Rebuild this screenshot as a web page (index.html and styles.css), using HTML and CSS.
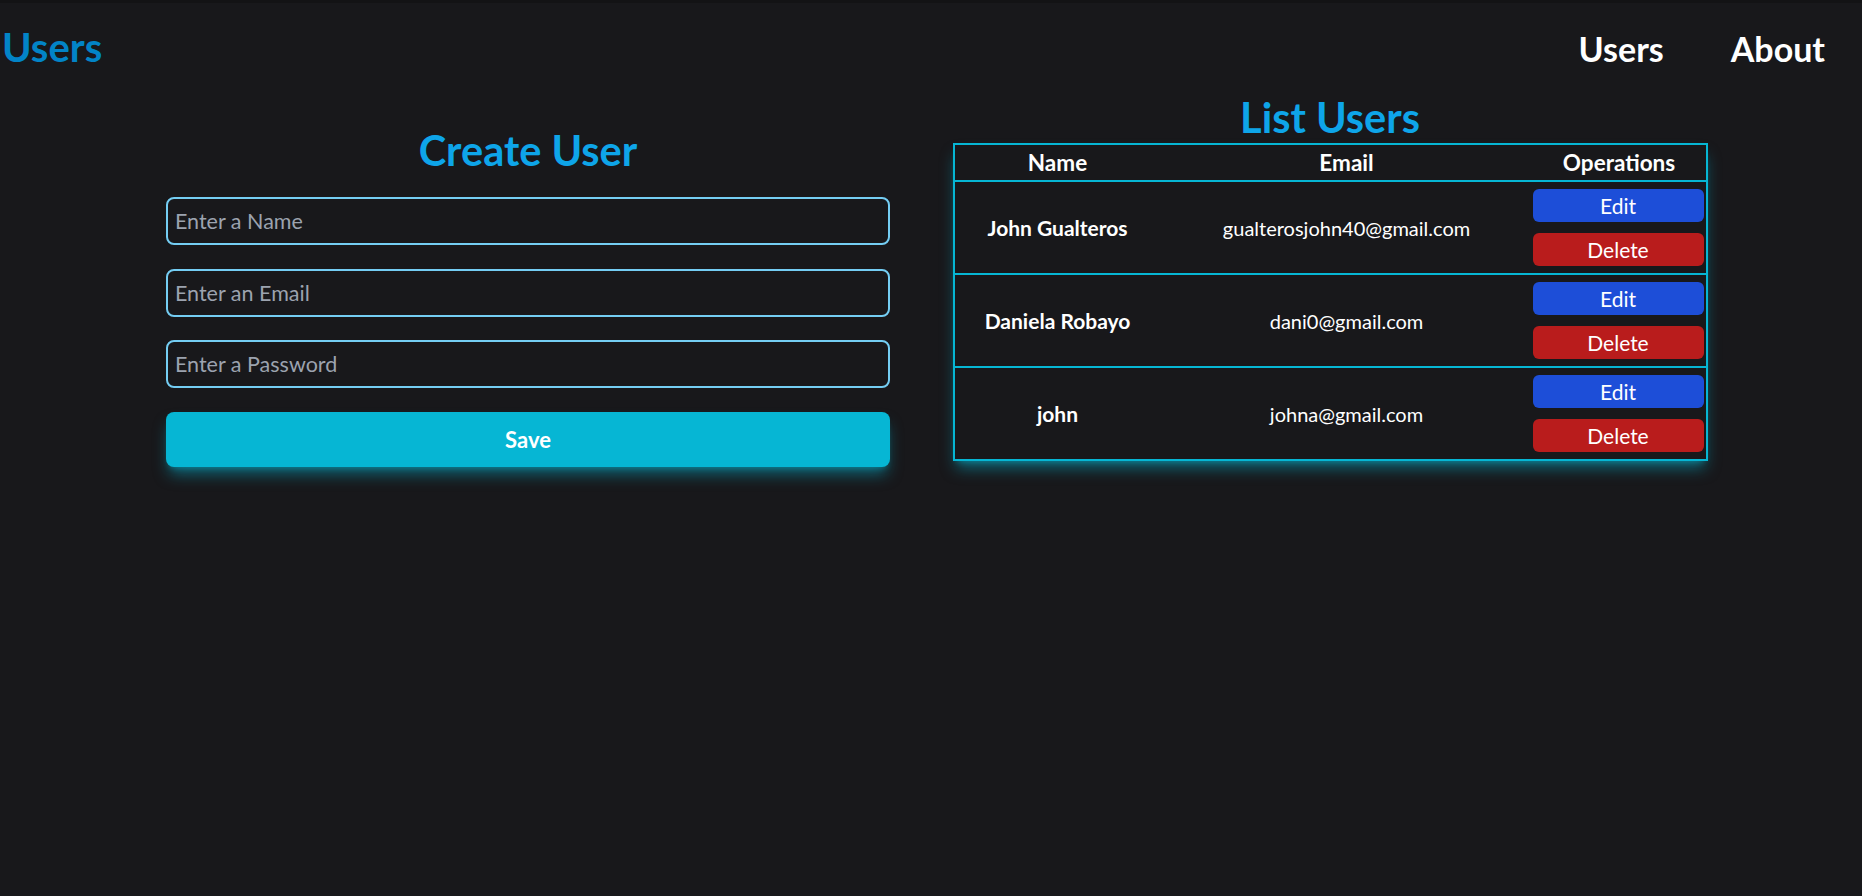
FILE: index.html
```html
<!DOCTYPE html>
<html lang="en">
<head>
<meta charset="utf-8">
<title>Users</title>
<link rel="stylesheet" href="styles.css">
</head>
<body>
<div class="topstrip"></div>
<header class="topbar">
  <h1 class="brand">Users</h1>
  <nav class="nav">
    <a class="nav-link" href="#">Users</a>
    <a class="nav-link" href="#">About</a>
  </nav>
</header>
<main class="content">
  <section class="panel panel-form">
    <h2 class="panel-title create-title">Create User</h2>
    <form class="user-form">
      <input class="field" type="text" placeholder="Enter a Name">
      <input class="field" type="email" placeholder="Enter an Email">
      <input class="field" type="password" placeholder="Enter a Password">
      <button class="btn-save" type="button">Save</button>
    </form>
  </section>
  <section class="panel panel-list">
    <h2 class="panel-title list-title">List Users</h2>
    <div class="table-wrap">
      <table class="users-table">
        <thead>
          <tr><th class="col-name">Name</th><th>Email</th><th class="col-ops">Operations</th></tr>
        </thead>
        <tbody>
          <tr>
            <td class="cell-name">John Gualteros</td>
            <td class="cell-email">gualterosjohn40@gmail.com</td>
            <td class="cell-ops"><button class="btn btn-edit" type="button">Edit</button><button class="btn btn-delete" type="button">Delete</button></td>
          </tr>
          <tr>
            <td class="cell-name">Daniela Robayo</td>
            <td class="cell-email">dani0@gmail.com</td>
            <td class="cell-ops"><button class="btn btn-edit" type="button">Edit</button><button class="btn btn-delete" type="button">Delete</button></td>
          </tr>
          <tr>
            <td class="cell-name">john</td>
            <td class="cell-email">johna@gmail.com</td>
            <td class="cell-ops"><button class="btn btn-edit" type="button">Edit</button><button class="btn btn-delete" type="button">Delete</button></td>
          </tr>
        </tbody>
      </table>
    </div>
  </section>
</main>
</body>
</html>
```

FILE: styles.css
```css
* { box-sizing: border-box; }
html, body { margin: 0; padding: 0; }
body {
  background: #18181b;
  color: #ffffff;
  font-family: Lato, "Open Sans", sans-serif;
  min-height: 896px;
}
.topstrip { height: 3px; background: #131315; }
.topbar {
  display: flex;
  justify-content: space-between;
  align-items: baseline;
  padding: 4px 37px 0 2px;
  height: 84px;
}
.brand {
  margin: 0;
  font-size: 40px;
  line-height: 80px;
  font-weight: 700;
  color: #0284c7;
}
.nav { display: flex; gap: 67px; }
.nav-link {
  color: #ffffff;
  text-decoration: none;
  font-size: 34px;
  font-weight: 700;
}
.content {
  display: grid;
  grid-template-columns: 1fr 1fr;
  padding: 0 131px 0 127px;
}
.panel { display: flex; flex-direction: column; align-items: center; }
.panel-title {
  margin: 0;
  font-size: 41.5px;
  font-weight: 700;
  color: #0ea5e9;
  line-height: 50px;
}
.create-title { margin-top: 38px; margin-bottom: 22px; }
.list-title { margin-top: 5px; margin-bottom: 1px; }
.user-form {
  width: 724px;
  display: flex;
  flex-direction: column;
  gap: 23.5px;
}
.field {
  height: 48px;
  border: 2px solid #74cdf3;
  border-radius: 8px;
  background: transparent;
  color: #fff;
  font-family: inherit;
  font-size: 21.5px;
  padding: 0 7px;
  outline: none;
}
.field::placeholder { color: #9ca3af; }
.btn-save {
  height: 55px;
  border: none;
  border-radius: 8px;
  background: #06b6d4;
  color: #fff;
  font-family: inherit;
  font-size: 22px;
  font-weight: 700;
  box-shadow: 0 10px 15px -3px rgba(6,182,212,0.5), 0 4px 6px -4px rgba(6,182,212,0.5);
}
.table-wrap {
  width: 755px;
  border-radius: 6px;
  box-shadow: 0 10px 15px -3px rgba(6,182,212,0.5), 0 4px 6px -4px rgba(6,182,212,0.5);
}
.users-table {
  width: 100%;
  border-collapse: collapse;
  border: 2px solid #06b6d4;
  background: #18181b;
}
.users-table th {
  height: 37px;
  font-size: 22.5px;
  font-weight: 700;
  text-align: center;
  padding: 0;
}
.users-table .col-name { width: 207px; }
.users-table .col-ops { width: 173px; }
.users-table tbody tr { border-top: 2px solid #06b6d4; }
.users-table td { text-align: center; padding: 0; font-size: 20px; }
.users-table .cell-name { font-weight: 700; font-size: 21px; }
.users-table .cell-ops { padding: 7px 2px 7px 0; }
.btn {
  display: block;
  width: 171px;
  height: 33px;
  margin-left: auto;
  border: none;
  border-radius: 6px;
  color: #fff;
  font-family: inherit;
  font-size: 21px;
}
.btn + .btn { margin-top: 11px; }
.btn-edit { background: #1d4ed8; }
.btn-delete { background: #b91c1c; }
```
